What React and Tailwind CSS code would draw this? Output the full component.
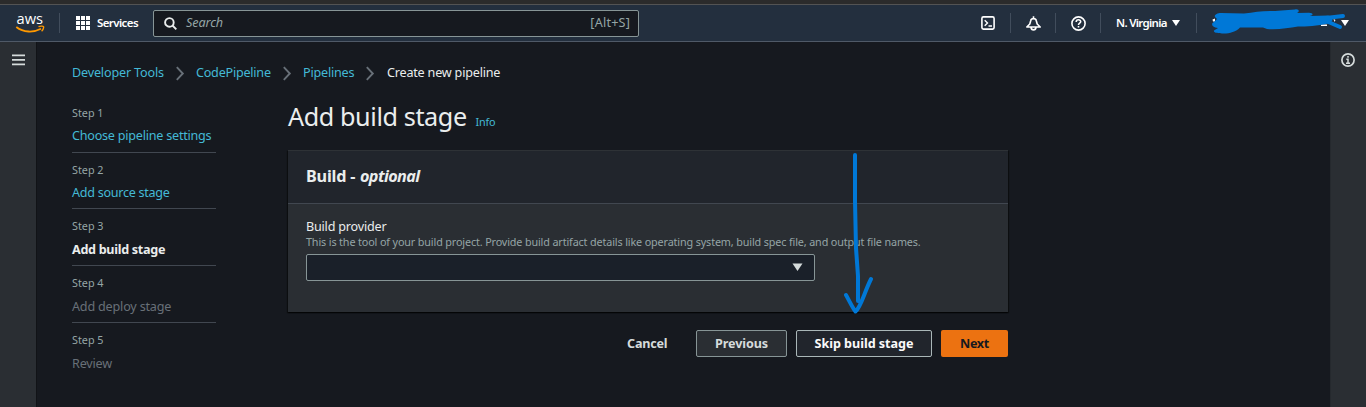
import React from "react";

const steps = [
  { n: "Step 1", t: "Choose pipeline settings", h: "h-[50px] border-b", c: "mt-[2px] text-[#44b9d6] tracking-[-0.23px]" },
  { n: "Step 2", t: "Add source stage", h: "h-[56px] border-b pt-[7px]", c: "mt-[2px] text-[#44b9d6] tracking-[-0.29px]" },
  { n: "Step 3", t: "Add build stage", h: "h-[57px] border-b pt-[7px]", c: "mt-[3px] font-bold text-[#eaeded] tracking-[-0.3px]" },
  { n: "Step 4", t: "Add deploy stage", h: "h-[57px] border-b pt-[7px]", c: "mt-[3px] text-[#687078] tracking-[-0.19px]" },
  { n: "Step 5", t: "Review", h: "h-[57px] pt-[7px]", c: "mt-[3px] text-[#687078] tracking-[-0.19px]" },
];

function Chevron() {
  return (
    <svg className="block h-[16px] w-[10px] shrink-0" viewBox="0 0 10 16" fill="none" stroke="#687078" strokeWidth="1.900">
      <path d="M0.800 2.200L6.800 8.500l-6 6.300" />
    </svg>
  );
}

function Caret() {
  return (
    <svg className="block h-[6px] w-[8px] shrink-0" viewBox="0 0 8 6" fill="#fff">
      <path d="M0 0h8L4 6z" />
    </svg>
  );
}

function Divider() {
  return <div className="h-[20px] w-px shrink-0 bg-[#414d5c]" />;
}

function TopBar() {
  return (
    <header className="flex h-[38px] shrink-0 items-center border-y border-t-[#535353] border-b-[#4f5967] bg-[#232f3e] text-white">
      <svg className="ml-[13px] block h-[28px] w-[33px] shrink-0 overflow-visible" viewBox="-2 -3 33 28">
        <text x="1.500" y="11.500" fill="#fff" fontFamily="Open Sans, sans-serif" fontSize="15" fontWeight="500" textLength="26.500" lengthAdjust="spacingAndGlyphs">aws</text>
        <path d="M1.300 15C8.500 20.600 18.500 20.800 26 16.800" fill="none" stroke="#f90" strokeWidth="1.800" />
        <path d="M23.500 14.700C25.500 13.800 29.300 13.800 28.600 15.600C28.400 16.900 27.800 18.200 26.600 19.200" fill="none" stroke="#f90" strokeWidth="1.400" />
      </svg>
      <div className="ml-[13px]"><Divider /></div>
      <svg className="ml-[16px] block h-[14px] w-[14px] shrink-0" viewBox="0 0 14 14" fill="#fff">
        {[0, 5, 10].map((x) => [0, 5, 10].map((y) => <rect key={`${x}-${y}`} x={x} y={y} width="4" height="4" />))}
      </svg>
      <span className="ml-[7px] w-[56px] pb-px text-[11.5px] font-semibold tracking-[-0.6px]">Services</span>
      <div className="flex h-[27px] w-[486px] items-center rounded-xs border border-[#879596] bg-[#16191f] pr-[8px] pl-[10px]">
        <svg className="block h-[13px] w-[13px]" viewBox="0 0 13 13" fill="none" stroke="#eaeded" strokeWidth="1.900">
          <circle cx="5.400" cy="5.400" r="4.300" />
          <path d="M8.500 8.500l3.800 3.800" />
        </svg>
        <span className="ml-[9px] text-[12.6px] tracking-[-0.1px] text-[#95a5a6] italic">Search</span>
        <span className="ml-auto text-[12.6px] tracking-[0.2px] text-[#95a5a6]">[Alt+S]</span>
      </div>
      <svg className="ml-[342px] block h-[14px] w-[14px] shrink-0" viewBox="0 0 14 14" fill="none" stroke="#fff" strokeWidth="1.600">
        <rect x="0.900" y="0.900" width="12.200" height="12.200" rx="1.500" />
        <path d="M3.700 4.200L6.500 7l-2.800 2.800M7.500 10h3.500" strokeWidth="1.400" />
      </svg>
      <div className="ml-[15px]"><Divider /></div>
      <svg className="ml-[15px] block h-[15px] w-[15px] shrink-0" viewBox="0 0 15 15" fill="none" stroke="#fff" strokeWidth="1.600">
        <path d="M7.500 0.300v2M3.800 8L4.700 4.700C5.200 1.900 9.800 1.900 10.300 4.700L11.200 8L14.200 11H0.800zM5 11.400C5.300 14.700 9.700 14.700 10 11.400" strokeLinejoin="round" />
      </svg>
      <div className="ml-[14px]"><Divider /></div>
      <svg className="ml-[15px] block h-[15px] w-[15px] shrink-0" viewBox="0 0 15 15" fill="none" stroke="#fff" strokeWidth="1.600">
        <circle cx="7.500" cy="7.500" r="6.600" />
        <path d="M5.200 6C5.200 3 9.800 3.200 9.700 5.800C9.600 7.300 7.500 7.200 7.500 9M7.500 10v1.500" />
      </svg>
      <div className="ml-[14px]"><Divider /></div>
      <span className="ml-[15px] w-[56px] pb-px text-[11.5px] font-semibold tracking-[-0.7px] whitespace-nowrap">N. Virginia</span>
      <Caret />
      <div className="ml-[16px]"><Divider /></div>
      <svg className="ml-[14px] block h-[28px] w-[136px] shrink-0" viewBox="1211 9 136 28">
        <path d="M1212.500 19.500l2.500-1v3h-2z M1321 24.500h6v1.500h-6z M1333.500 19l2 1-1 2z" fill="#fff" />
        <path d="M1215 17C1214 15 1217 13 1221 13L1244 13.500C1255 12 1263 10.500 1275 11L1295 9.500C1299 8.500 1300 12 1297 13L1309 12.800C1313 13 1314 15 1310 16L1328 15.500C1334 16 1334 22 1328 23.500C1318 26 1306 26.500 1298 26.500C1288 28 1278 30 1267 29L1263 27.500L1240 27.500C1236 32 1228 34 1222 33.500C1219 33 1213 33.500 1214 30.500L1218 28C1211 27 1211 23 1214 22L1217 19z" fill="#0078d7" />
        <path d="M1326 18L1343 16M1326 21L1340 27" stroke="#0078d7" strokeWidth="4" strokeLinecap="round" />
      </svg>
      <div className="-ml-[6px]"><Caret /></div>
    </header>
  );
}

function Breadcrumbs() {
  return (
    <nav className="flex h-[20px] items-center text-[12.6px] whitespace-nowrap text-[#44b9d6]">
      <span className="w-[104px] tracking-[-0.17px]">Developer Tools</span><Chevron />
      <span className="ml-[10px] w-[87px] tracking-[-0.23px]">CodePipeline</span><Chevron />
      <span className="ml-[10px] w-[63px] tracking-[-0.2px]">Pipelines</span><Chevron />
      <span className="ml-[11px] tracking-[-0.2px] text-[#eaeded]">Create new pipeline</span>
    </nav>
  );
}

function Steps() {
  return (
    <aside className="mt-[20px] w-[144px] shrink-0">
      {steps.map((s) => (
        <div key={s.n} className={`border-[#414750] whitespace-nowrap ${s.h}`}>
          <div className="h-[20px] text-[10.8px] leading-[20px] text-[#95a5a6]">{s.n}</div>
          <div className={`h-[22px] text-[12.6px] leading-[22px] ${s.c}`}>{s.t}</div>
        </div>
      ))}
    </aside>
  );
}

function BuildPanel() {
  return (
    <section className="h-[162px] border-t border-[#2e3236] bg-[#2a2e33] shadow-[0_1px_1px_#0006,1px_1px_1px_#0006,-1px_1px_1px_#0006]">
      <h2 className="flex h-[53px] items-center border-b border-[#414750] bg-[#21252c] pb-px pl-[18px] text-[16.2px] font-bold whitespace-pre text-[#eaeded]">
        <span className="w-[54px] tracking-[-0.2px]">Build - </span><em className="tracking-[-0.6px]">optional</em>
      </h2>
      <div className="pt-[14px] pl-[18px]">
        <div className="h-[16px] text-[12.6px] leading-[18px] tracking-[-0.2px] text-[#eaeded]">Build provider</div>
        <div className="h-[20px] text-[10.8px] leading-[16px] tracking-[-0.138px] whitespace-nowrap text-[#95a5a6]">
          This is the tool of your build project. Provide build artifact details like operating system, build spec file, and output file names.
        </div>
        <div className="flex h-[27px] w-[509px] items-center justify-end rounded-xs border border-[#879596] bg-[#1a2029] pr-[11px]">
          <svg className="-mt-px block h-[8px] w-[11px]" viewBox="0 0 11 8" fill="#d5dbdb"><path d="M0.500 0.500h10L5.500 8z" /></svg>
        </div>
      </div>
    </section>
  );
}

export default function App() {
  return (
    <div className="relative flex h-[407px] w-[1366px] flex-col overflow-hidden bg-[#16191f] font-['Noto_Sans',sans-serif]">
      <div className="h-[4px] shrink-0 bg-[#2b2b2b]" />
      <TopBar />
      <div className="flex flex-1">
        <div className="w-[36px] shrink-0 bg-[#2a2e33] pt-[12px] pl-[12px]">
          <svg className="block h-[12px] w-[13px]" viewBox="0 0 13 12" fill="#d5dbdb">
            <path d="M0 0.500h13v1.800H0zM0 5h13v1.800H0zM0 9.500h13v1.800H0z" />
          </svg>
        </div>
        <main className="flex-1 border-l border-[#111317] pt-[21px] pl-[35px]">
          <Breadcrumbs />
          <div className="flex">
            <Steps />
            <div className="ml-[72px] w-[720px] pt-[14px]">
              <h1 className="flex h-[53px] items-baseline whitespace-nowrap text-[#eaeded]">
                <span className="w-[187.5px] text-[25.2px] leading-[38px] tracking-[-0.4px]">Add build stage</span>
                <span className="text-[10.8px] tracking-[-0.15px] text-[#44b9d6]">Info</span>
              </h1>
              <BuildPanel />
              <div className="mt-[18px] flex items-center justify-end text-[12.6px] font-bold whitespace-nowrap">
                <span className="w-[69px] pt-px tracking-[-0.2px] text-[#d5dbdb]">Cancel</span>
                <button className="h-[27px] w-[91px] rounded-xs border border-[#879596] bg-[#2a2e33] pt-px tracking-[-0.1px] text-[#d5dbdb]">Previous</button>
                <button className="ml-[9px] h-[27px] w-[136px] rounded-xs border border-[#aab7b8] bg-[#21252c] pt-px tracking-[-0.03px] text-[#fafafa]">Skip build stage</button>
                <button className="ml-[9px] h-[27px] w-[67px] rounded-xs bg-[#ec7211] pt-px tracking-[-0.3px] text-[#16191f]">Next</button>
              </div>
            </div>
          </div>
        </main>
        <div className="w-[36px] shrink-0 border-l border-[#25292e] bg-[#2a2e33] pt-[11px] pl-[10px]">
          <svg className="block h-[14px] w-[14px]" viewBox="0 0 14 14" fill="none" stroke="#d5dbdb" strokeWidth="1.700">
            <circle cx="7" cy="7" r="6.100" />
            <path d="M7 3v1.700M5.300 6.300H7v4M5 10.200h4" strokeWidth="1.500" />
          </svg>
        </div>
      </div>
      <svg className="pointer-events-none absolute top-[150px] left-[840px] h-[166px] w-[40px]" viewBox="840 150 40 166" fill="none" stroke="#0078d7" strokeWidth="4" strokeLinecap="round" strokeLinejoin="round">
        <path d="M855 155V201L856 248L858 276V301M846 295C849 300 852 307 855.500 311.500C861 307 864 293 871 279" />
      </svg>
    </div>
  );
}
